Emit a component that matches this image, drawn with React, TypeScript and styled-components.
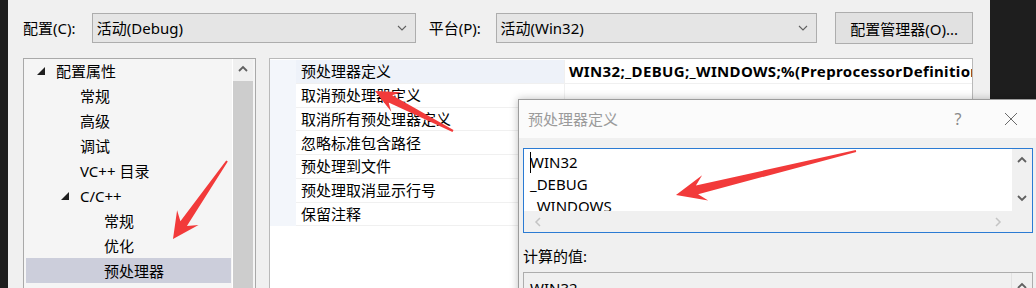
import React from "react";
import styled, { createGlobalStyle } from "styled-components";

const Global = createGlobalStyle`
  html, body { margin: 0; padding: 0; background: #1e1e1e; }
  body { font-family: "Noto Sans", "Noto Sans CJK SC", sans-serif; }
`;

const FONT = `"Noto Sans", "Noto Sans CJK SC", sans-serif`;

const Screen = styled.div`
  position: relative;
  width: 1036px;
  height: 288px;
  overflow: hidden;
  display: flex;
  background: #1e1e1e;
  font-family: ${FONT};
  font-size: 15px;
  color: #000;
`;

const Edge = styled.div<{ $w?: number }>`
  flex: ${(p) => (p.$w ? `0 0 ${p.$w}px` : "1 1 auto")};
  background: #1e1e1e;
`;

const Window = styled.div`
  flex: 0 0 982px;
  height: 288px;
  box-sizing: border-box;
  background: #f0f0f0;
  padding: 12px 17px 0 15px;
  display: flex;
  flex-direction: column;
  overflow: hidden;
`;

const TopBar = styled.div`
  display: flex;
  align-items: center;
  height: 32px;
  margin-bottom: 14px;
`;

const Label = styled.div<{ $w: number; $ml?: number }>`
  width: ${(p) => p.$w}px;
  margin-left: ${(p) => p.$ml ?? 0}px;
  line-height: 20px;
  white-space: nowrap;
`;

const Combo = styled.div<{ $w: number }>`
  width: ${(p) => p.$w}px;
  height: 30px;
  box-sizing: border-box;
  border: 1px solid #adadad;
  background: #e5e5e5;
  display: flex;
  align-items: center;
  padding: 0 8px 0 4px;
  line-height: 20px;
`;

const ComboText = styled.span`
  flex: 1;
  white-space: nowrap;
`;

const Button = styled.div`
  margin-left: 18px;
  width: 138px;
  height: 32px;
  box-sizing: border-box;
  border: 1px solid #adadad;
  background: #e1e1e1;
  display: flex;
  align-items: center;
  justify-content: center;
  white-space: nowrap;
`;

const Body = styled.div`
  display: flex;
  gap: 13px;
  height: 240px;
  flex: none;
`;

const TreePanel = styled.div`
  width: 233px;
  box-sizing: border-box;
  border: 1px solid #a9a9a9;
  background: #f5f5f5;
  display: flex;
`;

const TreeList = styled.div`
  flex: 1;
  padding: 0 1px 0 2px;
  display: flex;
  flex-direction: column;
`;

const TreeRow = styled.div<{ $level: number; $selected?: boolean }>`
  height: 24.9px;
  flex: none;
  display: flex;
  align-items: center;
  padding-left: ${(p) => 6 + p.$level * 24}px;
  background: ${(p) => (p.$selected ? "#cccedb" : "transparent")};
  white-space: nowrap;
  line-height: 20px;
`;

const Toggle = styled.span`
  width: 24px;
  flex: none;
  display: flex;
  align-items: center;
  padding-left: 5px;
  box-sizing: border-box;
`;

const VScroll = styled.div`
  width: 20px;
  margin-right: 2px;
  display: flex;
  flex-direction: column;
  background: #f0f0f0;
  border-left: 1px solid #ffffff;
`;

const ScrollBtn = styled.div<{ $h?: number }>`
  height: ${(p) => p.$h ?? 22}px;
  flex: none;
  display: flex;
  align-items: center;
  justify-content: center;
`;

const Thumb = styled.div`
  flex: 1;
  background: #cdcdcd;
`;

const PropPanel = styled.div`
  flex: 1;
  box-sizing: border-box;
  border: 1px solid #b9b9b9;
  background: #ffffff;
  display: flex;
  flex-direction: column;
  padding-top: 1px;
`;

const PropRow = styled.div<{ $active?: boolean }>`
  height: 23.75px;
  display: grid;
  grid-template-columns: 26px 269px 1fr;
  flex: none;
  background: ${(p) => (p.$active ? "#eef2f9" : "transparent")};
`;

const CatCell = styled.div`
  background: #f3f6fb;
`;

const NameCell = styled.div<{ $active?: boolean }>`
  padding-left: 5px;
  display: flex;
  align-items: center;
  border-bottom: 1px solid #f0f0f0;
  border-right: 1px solid #f0f0f0;
  background: ${(p) => (p.$active ? "#eef2f9" : "#ffffff")};
  white-space: nowrap;
  line-height: 20px;
`;

const ValueCell = styled.div`
  padding-left: 4px;
  display: flex;
  align-items: center;
  border-bottom: 1px solid #f0f0f0;
  background: #ffffff;
  font-weight: 700;
  letter-spacing: 0.35px;
  white-space: nowrap;
  overflow: hidden;
  line-height: 20px;
`;

const Dialog = styled.div`
  position: absolute;
  left: 518px;
  top: 99px;
  width: 540px;
  height: 230px;
  border: 1px solid #9c9c9c;
  box-shadow: 0 0 8px rgba(0, 0, 0, 0.25);
  background: #f0f0f0;
  display: flex;
  flex-direction: column;
  font-family: ${FONT};
  z-index: 2;
`;

const TitleBar = styled.div`
  height: 38px;
  flex: none;
  background: #fbfbfb;
  display: flex;
  align-items: center;
  padding-left: 9px;
`;

const Title = styled.div`
  flex: 1;
  color: #9a9a9a;
  line-height: 20px;
`;

const Help = styled.div`
  width: 20px;
  margin-right: 35px;
  color: #8a8a8a;
  font-size: 16px;
  text-align: center;
`;

const Close = styled.div`
  width: 16px;
  margin-right: 40px;
  display: flex;
  align-items: center;
`;

const DialogBody = styled.div`
  padding: 10px 4px 0 4px;
  display: flex;
  flex-direction: column;
`;

const EditBox = styled.div`
  width: 510px;
  height: 85px;
  box-sizing: border-box;
  border: 1px solid #2b7bd3;
  display: grid;
  grid-template-columns: 1fr 20px;
  grid-template-rows: 1fr 21px;
  background: #f0f0f0;
`;

const EditText = styled.div`
  background: #ffffff;
  padding: 2px 0 0 6px;
  overflow: hidden;
  line-height: 22px;
`;

const Line = styled.div`
  white-space: nowrap;
`;

const Caret = styled.span`
  display: inline-block;
  width: 0;
  height: 21px;
  border-left: 1px solid #000;
  vertical-align: -5px;
  margin-right: -1px;
`;

const VBar = styled.div`
  display: flex;
  flex-direction: column;
  justify-content: space-between;
  align-items: center;
  padding: 7px 0 7px;
`;

const HBar = styled.div`
  display: flex;
  justify-content: space-between;
  align-items: center;
  padding: 0 9px 0 10px;
`;

const Computed = styled.div`
  margin: 12px 0 5px;
  line-height: 22px;
`;

const ComputedBox = styled.div`
  width: 510px;
  height: 60px;
  box-sizing: border-box;
  border: 1px solid #adadad;
  background: #f0f0f0;
  display: grid;
  grid-template-columns: 1fr 20px;
`;

const ComputedText = styled.div`
  padding: 4px 0 0 6px;
  line-height: 22px;
  border-right: 1px solid #e2e2e2;
`;

const ComputedScroll = styled.div`
  display: flex;
  justify-content: center;
  padding-top: 9px;
`;

const Overlay = styled.svg`
  position: absolute;
  left: 0;
  top: 0;
  width: 1036px;
  height: 288px;
  pointer-events: none;
  z-index: 5;
`;

const Chevron = ({ color = "#606060" }: { color?: string }) => (
  <svg width="10" height="6" viewBox="0 0 10 6">
    <polyline points="1,1 5,5 9,1" fill="none" stroke={color} strokeWidth="1.1" />
  </svg>
);

const Arrow = ({ dir, color = "#606060", w = 1.8 }: { dir: "up" | "down" | "left" | "right"; color?: string; w?: number }) => {
  const pts: Record<string, string> = {
    up: "1,6 5,2 9,6",
    down: "1,2 5,6 9,2",
    left: "6,1 2,5 6,9",
    right: "3,1 7,5 3,9",
  };
  return (
    <svg width="10" height="10" viewBox="0 0 10 10">
      <polyline points={pts[dir]} fill="none" stroke={color} strokeWidth={w} />
    </svg>
  );
};

const Triangle = () => (
  <svg width="8" height="8" viewBox="0 0 8 8">
    <polygon points="8,0 8,8 0,8" fill="#1e1e1e" />
  </svg>
);

function arrowPoints(
  tx: number,
  ty: number,
  hx: number,
  hy: number,
  headLen: number,
  headHalf: number,
  neckHalf: number,
  tailHalf: number
) {
  const dx = hx - tx;
  const dy = hy - ty;
  const len = Math.hypot(dx, dy);
  const ux = dx / len;
  const uy = dy / len;
  const nx = -uy;
  const ny = ux;
  const bx = hx - ux * headLen;
  const by = hy - uy * headLen;
  const kx = hx - ux * headLen * 0.72;
  const ky = hy - uy * headLen * 0.72;
  const p = (x: number, y: number) => `${x.toFixed(1)},${y.toFixed(1)}`;
  return [
    p(tx + nx * tailHalf, ty + ny * tailHalf),
    p(kx + nx * neckHalf, ky + ny * neckHalf),
    p(bx + nx * headHalf, by + ny * headHalf),
    p(hx, hy),
    p(bx - nx * headHalf, by - ny * headHalf),
    p(kx - nx * neckHalf, ky - ny * neckHalf),
    p(tx - nx * tailHalf, ty - ny * tailHalf),
  ].join(" ");
}

const treeItems: { label: string; level: number; open?: boolean; selected?: boolean }[] = [
  { label: "配置属性", level: 0, open: true },
  { label: "常规", level: 1 },
  { label: "高级", level: 1 },
  { label: "调试", level: 1 },
  { label: "VC++ 目录", level: 1 },
  { label: "C/C++", level: 1, open: true },
  { label: "常规", level: 2 },
  { label: "优化", level: 2 },
  { label: "预处理器", level: 2, selected: true },
];

const props: { name: string; value?: string }[] = [
  { name: "预处理器定义", value: "WIN32;_DEBUG;_WINDOWS;%(PreprocessorDefinitions)" },
  { name: "取消预处理器定义" },
  { name: "取消所有预处理器定义" },
  { name: "忽略标准包含路径" },
  { name: "预处理到文件" },
  { name: "预处理取消显示行号" },
  { name: "保留注释" },
];

export default function App() {
  return (
    <Screen>
      <Global />
      <Edge $w={8} />
      <Window>
        <TopBar>
          <Label $w={69}>配置(C):</Label>
          <Combo $w={325}>
            <ComboText>活动(Debug)</ComboText>
            <Chevron />
          </Combo>
          <Label $w={67} $ml={13}>平台(P):</Label>
          <Combo $w={323}>
            <ComboText>活动(Win32)</ComboText>
            <Chevron />
          </Combo>
          <Button>配置管理器(O)...</Button>
        </TopBar>
        <Body>
          <TreePanel>
            <TreeList>
              {treeItems.map((it, i) => (
                <TreeRow key={i} $level={it.level} $selected={it.selected}>
                  {it.open ? (
                    <Toggle>
                      <Triangle />
                    </Toggle>
                  ) : (
                    <Toggle />
                  )}
                  {it.label}
                </TreeRow>
              ))}
            </TreeList>
            <VScroll>
              <ScrollBtn>
                <Arrow dir="up" />
              </ScrollBtn>
              <Thumb />
            </VScroll>
          </TreePanel>
          <PropPanel>
            {props.map((p, i) => (
              <PropRow key={i} $active={i === 0}>
                <CatCell />
                <NameCell $active={i === 0}>{p.name}</NameCell>
                <ValueCell>{p.value ?? ""}</ValueCell>
              </PropRow>
            ))}
          </PropPanel>
        </Body>
      </Window>
      <Edge />
      <Dialog>
        <TitleBar>
          <Title>预处理器定义</Title>
          <Help>?</Help>
          <Close>
            <svg width="16" height="16" viewBox="0 0 16 16">
              <path d="M2 2 L14 14 M14 2 L2 14" stroke="#6a6a6a" strokeWidth="1" fill="none" />
            </svg>
          </Close>
        </TitleBar>
        <DialogBody>
          <EditBox>
            <EditText>
              <Line>
                <Caret />
                WIN32
              </Line>
              <Line>_DEBUG</Line>
              <Line>_WINDOWS</Line>
            </EditText>
            <VBar>
              <Arrow dir="up" />
              <Arrow dir="down" />
            </VBar>
            <HBar>
              <Arrow dir="left" color="#c4c4c4" w={1.5} />
              <Arrow dir="right" color="#c4c4c4" w={1.5} />
            </HBar>
            <div />
          </EditBox>
          <Computed>计算的值:</Computed>
          <ComputedBox>
            <ComputedText>WIN32</ComputedText>
            <ComputedScroll>
              <Arrow dir="up" />
            </ComputedScroll>
          </ComputedBox>
        </DialogBody>
      </Dialog>
      <Overlay viewBox="0 0 1036 288">
        <polygon points={arrowPoints(227, 161, 173, 239, 26, 13, 4, 1)} fill="#f23a3a" />
        <polygon points={arrowPoints(453, 131, 375, 91, 24, 11, 4, 1)} fill="#f23a3a" />
        <polygon points={arrowPoints(856, 151, 676, 195, 30, 13, 4.5, 1)} fill="#f23a3a" />
      </Overlay>
    </Screen>
  );
}
